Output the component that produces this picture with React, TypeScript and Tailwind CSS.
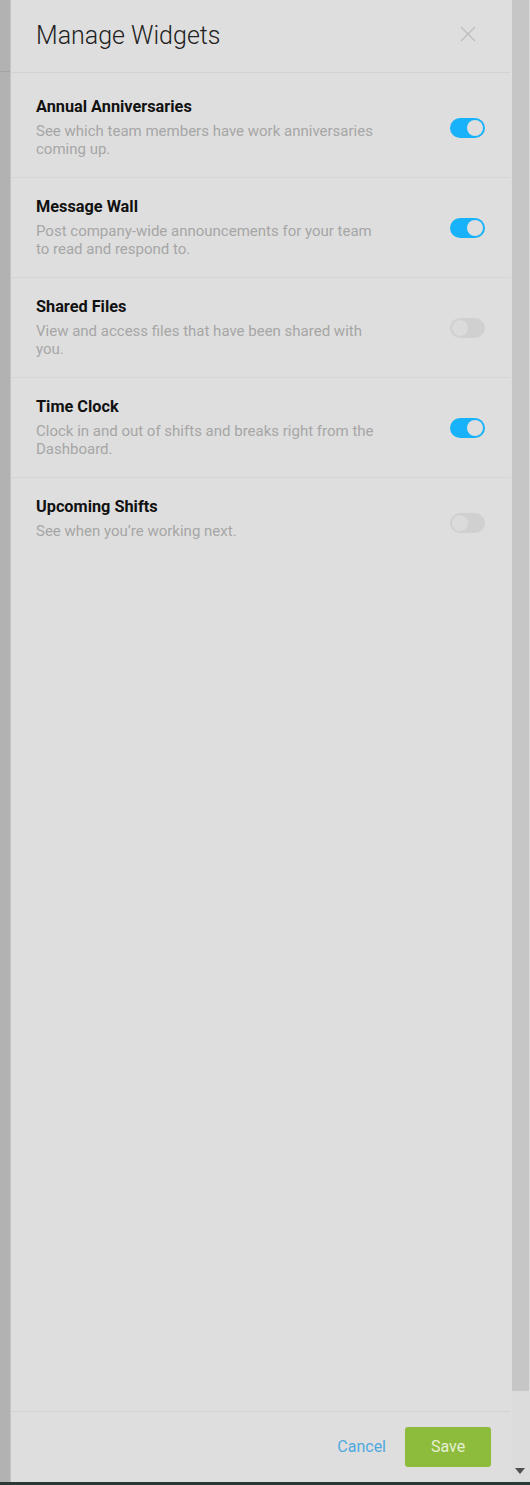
import React from "react";

const widgets = [
  { title: "Annual Anniversaries", desc: "See which team members have work anniversaries coming up.", on: true },
  { title: "Message Wall", desc: "Post company-wide announcements for your team to read and respond to.", on: true },
  { title: "Shared Files", desc: "View and access files that have been shared with you.", on: false },
  { title: "Time Clock", desc: "Clock in and out of shifts and breaks right from the Dashboard.", on: true },
  { title: "Upcoming Shifts", desc: "See when you\u2019re working next.", on: false },
];

function Toggle({ on }: { on: boolean }) {
  return on ? (
    <div className="w-[35px] h-[20px] rounded-full bg-[#18b2fa] flex items-center justify-end pr-[2px]">
      <div className="w-[16px] h-[16px] rounded-full bg-[#dfdfdf]" />
    </div>
  ) : (
    <div className="w-[35px] h-[20px] rounded-full bg-[#d0d0d0] flex items-center justify-start pl-[2px]">
      <div className="w-[16px] h-[16px] rounded-full bg-[#dbdbdb]" />
    </div>
  );
}

export default function App() {
  return (
    <div
      className="w-[530px] h-[1485px] flex flex-col overflow-hidden bg-[#dedede]"
      style={{ fontFamily: "Roboto, 'Noto Sans', sans-serif" }}
    >
      <div className="flex flex-1 min-h-0">
        <div className="w-[10px] bg-[#b2b2b2] flex flex-col">
          <div className="h-[72px] border-b border-[#a4a4a4]" />
        </div>
        <div className="w-px bg-[#c4c4c4]" />
        <div className="flex-1 flex flex-col bg-[#dedede]">
          <div className="h-[73px] border-b border-[#d3d3d3] flex items-center justify-between pl-[25px] pr-[34px] mr-[2px]">
            <div className="text-[25px] font-light text-[#222] leading-none pb-[1px]">Manage Widgets</div>
            <svg width="16" height="16" viewBox="0 0 16 16" className="mt-[-4px]">
              <path d="M1 1 L15 15 M15 1 L1 15" stroke="#bdbdbd" strokeWidth="1.3" />
            </svg>
          </div>
          <div className="pt-[5px]">
            {widgets.map((w, i) => {
              const last = i === widgets.length - 1;
              return (
                <div
                  key={i}
                  className={
                    "flex items-center justify-between pl-[25px] pr-[25px] mr-[2px] " +
                    (last ? "h-[90px]" : "h-[100px] border-b border-[#d5d5d5]")
                  }
                >
                  <div className={"w-[345px] " + (last ? "pb-[9px]" : "")}>
                    <div className="text-[16.3px] font-bold text-[#111] leading-[20px]">{w.title}</div>
                    <div className="text-[15px] text-[#a6a6a6] leading-[18px] mt-[5px]">{w.desc}</div>
                  </div>
                  <Toggle on={w.on} />
                </div>
              );
            })}
          </div>
          <div className="flex-1" />
          <div className="h-[71px] border-t border-[#d3d3d3] flex items-center justify-end pr-[19px] mr-[2px]">
            <button className="text-[16px] text-[#4fa9df] mr-[19px]">Cancel</button>
            <button className="w-[86px] h-[40px] rounded-[3px] bg-[#8dbb3c] text-[16px] text-[#e6f0d4]">Save</button>
          </div>
        </div>
        <div className="w-[18px] flex flex-col bg-[#dcdcdc]">
          <div className="h-[1391px] bg-[#c6c6c6] mr-px" />
          <div className="flex-1 flex items-end justify-center pb-[8px] pr-[2px]">
            <svg width="10" height="6" viewBox="0 0 10 6">
              <path d="M0 0 L10 0 L5 6 Z" fill="#505050" />
            </svg>
          </div>
        </div>
      </div>
      <div className="h-[3px] bg-[#2a3838]" />
    </div>
  );
}
